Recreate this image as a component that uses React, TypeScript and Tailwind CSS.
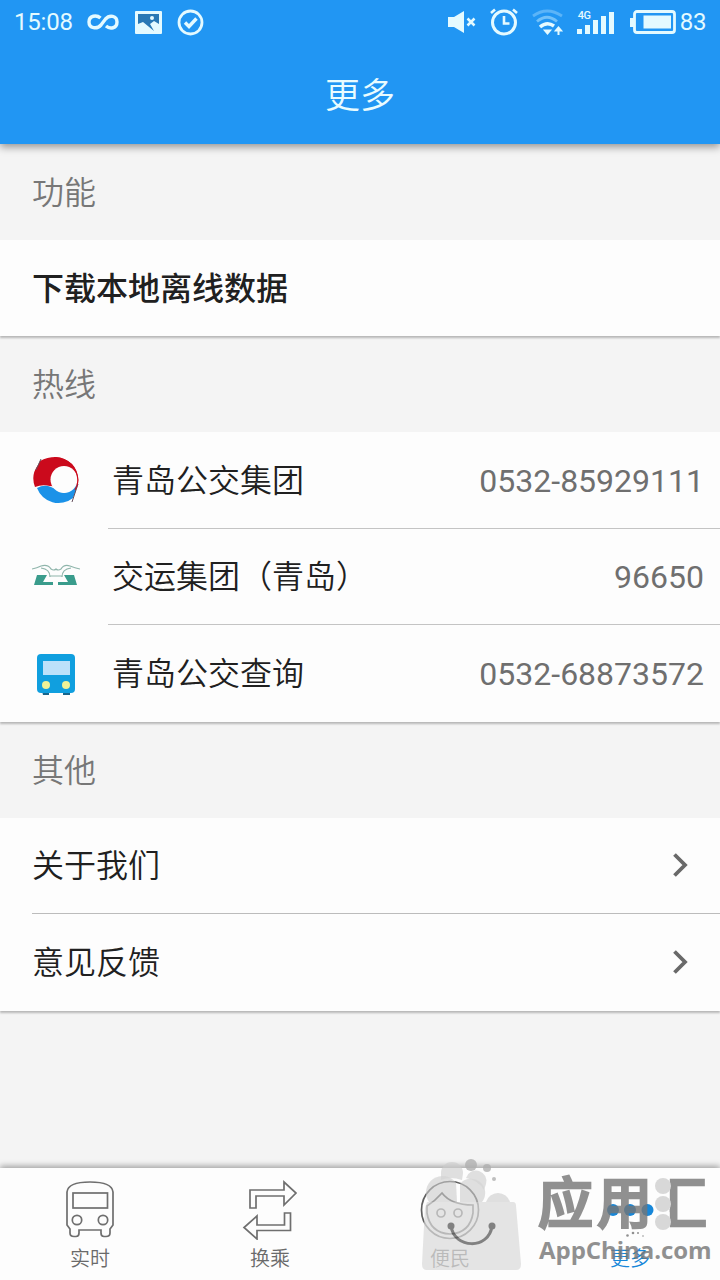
/**
 * 更多页面 - 功能、热线与其他设置入口
 */

import React from 'react';

interface Hotline {
  name: string;
  phone: string;
  icon: React.ReactNode;
}

interface Tab {
  label: string;
  icon: React.ReactNode;
  active?: boolean;
}

// 公交集团标志
const GroupLogo = () => (
  <svg className="w-12 h-12" viewBox="0 0 48 48">
    <path d="M3 31A23 23 0 0 1 6 9L8 5Q15 1 24 1A23 23 0 0 1 46 23L45 32L18 30Q10 28 3 31Z" fill="#cb0a1c" />
    <path d="M5 32Q12 28 19 31L32 37Q40 34 46 27Q44 36 41 42A23 23 0 0 1 5 32Z" fill="#1b92e8" />
    <circle cx="32" cy="23.500" r="13.500" fill="#fdfdfd" />
    <path d="M4 14L9 3M46 28L40 46" stroke="#66505e" strokeWidth="1" fill="none" />
    <path d="M22 1.500Q44 3 46 24Q46 29 43 34" stroke="#cb0a1c" strokeWidth="1.200" fill="none" />
  </svg>
);

// 交运集团标志
const TransportLogo = () => (
  <svg className="w-12 h-12" viewBox="0 -3 48 48" fill="none">
    <path d="M5 19H15L11 26H21V29H2Z" fill="#3a9c8c" />
    <path d="M32 19H42L45 29H26V26H36Z" fill="#3a9c8c" />
    <path d="M0 13Q5 12 9 10Q16 8 19 13Q22 15 24 13Q26 15 29 13Q32 8 38 10Q43 12 48 13M9 12Q18 13 18 21M39 12Q30 13 30 21M18 20H30" stroke="#8fb5ab" strokeWidth="1.200" />
  </svg>
);

// 公交查询标志
const BusLogo = () => (
  <svg className="w-12 h-12" viewBox="0 0 48 48">
    <path d="M10 42H17V46H11ZM31 42H38V46H31Z" fill="#17658c" />
    <rect x="5" y="5" width="38" height="39" rx="4" fill="#109fdf" />
    <rect x="11" y="12" width="27" height="14" fill="#bce1fa" />
    <circle cx="14" cy="36" r="4" fill="#f0f397" />
    <circle cx="34" cy="36" r="4" fill="#f0f397" />
  </svg>
);

const BusIcon = () => (
  <svg className="w-15 h-15" viewBox="0 0 60 60" fill="none" stroke="#6f6f6f" strokeWidth="1.7">
    <path d="M7 12Q8 2 30 2Q52 2 53 12V45L50 49V53Q50 56.500 46 56.500H44Q41 56.500 41 53V50H19V53Q19 56.500 16 56.500H14Q10 56.500 10 53V49L7 45Z" />
    <rect x="13" y="13" width="34.500" height="15" />
    <circle cx="17" cy="40" r="4.700" />
    <circle cx="43" cy="40" r="4.700" />
  </svg>
);

const TransferIcon = () => (
  <svg className="w-15 h-15" viewBox="0 0 60 60" fill="none" stroke="#6f6f6f" strokeWidth="1.700">
    <path d="M10 28V10H44V2L56 13L44 25V16H16V28Z" />
    <path d="M50.500 33H44.500V45H17V36L4 47.500L17 59V50.500H50.500Z" />
  </svg>
);

const PersonIcon = () => (
  <svg className="w-15 h-15" viewBox="0 0 60 60" fill="none" stroke="#606060" strokeWidth="1.700">
    <circle cx="30" cy="30" r="28.500" />
    <path d="M7 26Q15 21 22 13Q31 25 53 25V33Q50 53 30 54Q10 53 7 33Z" />
    <circle cx="21" cy="33" r="4" />
    <circle cx="38" cy="33" r="4" />
  </svg>
);

const MoreIcon = () => (
  <svg className="w-15 h-15" viewBox="0 0 60 60" fill="#1787d9">
    <circle cx="13" cy="30" r="6" />
    <circle cx="30" cy="30" r="6" />
    <circle cx="47.500" cy="30" r="6" />
  </svg>
);

const Chevron = () => (
  <svg className="w-4 h-6" viewBox="0 0 16 24" fill="none" stroke="#696969" strokeWidth="3.800">
    <path d="M2.500 1.500L13 12L2.500 22.500" />
  </svg>
);

const hotlines: Hotline[] = [
  { name: '青岛公交集团', phone: '0532-85929111', icon: <GroupLogo /> },
  { name: '交运集团（青岛）', phone: '96650', icon: <TransportLogo /> },
  { name: '青岛公交查询', phone: '0532-68873572', icon: <BusLogo /> },
];

const tabs: Tab[] = [
  { label: '实时', icon: <BusIcon /> },
  { label: '换乘', icon: <TransferIcon /> },
  { label: '便民', icon: <PersonIcon /> },
  { label: '更多', icon: <MoreIcon />, active: true },
];

// 状态栏
const StatusBar = () => (
  <div className="flex h-11 items-center justify-between pl-3.5 pr-3.5 text-2xl text-[#e4faff]">
    <div className="flex items-center">
      <span className="w-[59px] tracking-[-0.2px]">15:08</span>
      <svg className="ml-3.5 w-8 h-5" viewBox="0 0 32 20" fill="none" stroke="currentColor" strokeWidth="3.400">
        <path d="M13.500 6C9.500 2.500 2 3.500 2 10C2 16.500 10 17.500 14 13L18.500 7C22.500 2.500 30 3.500 30 10C30 16.500 23 17.500 19 14" />
      </svg>
      <svg className="ml-4 w-[27px] h-[23px]" viewBox="0 0 27 23">
        <rect width="27" height="23" rx="1" fill="currentColor" />
        <path d="M3 3H24V13L19 10L15 13L19 20L8 11L3 13Z" fill="#2878b5" />
        <circle cx="17" cy="7" r="2" fill="currentColor" />
      </svg>
      <svg className="ml-[15px] w-[27px] h-[27px]" viewBox="0 0 27 27" fill="none" stroke="currentColor">
        <circle cx="13.500" cy="13.500" r="11.500" strokeWidth="2.800" />
        <path d="M8 13.500L12 17.500L19.500 9.500" strokeWidth="3.400" />
      </svg>
    </div>
    <div className="flex items-center">
      <svg className="w-7 h-6" viewBox="0 0 28 24">
        <path d="M0 7H6L16 1V23L6 17H0Z" fill="currentColor" />
        <path d="M19.500 8.500L26.500 15.500M26.500 8.500L19.500 15.500" stroke="currentColor" strokeWidth="2.500" />
      </svg>
      <svg className="ml-3.5 w-7 h-7" viewBox="0 0 28 28" fill="none" stroke="currentColor" strokeWidth="3">
        <circle cx="14" cy="14.500" r="11.500" />
        <path d="M14 8V15.500H19.500M1 5L5 1.500M27 5L23 1.500" strokeWidth="2.600" />
      </svg>
      <svg className="ml-3.5 w-8 h-7" viewBox="0 0 32 28" fill="none" stroke="currentColor">
        <path d="M1 8Q15 -2 30 8" stroke="#5bb4f8" strokeWidth="2.800" />
        <path d="M5 13.500Q15 5 25 13.500" stroke="#72c1f9" strokeWidth="2.800" />
        <path d="M8 19Q15 13 22 18" strokeWidth="3.500" />
        <path d="M13 22.500H18L15.500 25.500ZM26.500 27V21M24 22.500L26.500 19.500L29 22.500Z" fill="currentColor" strokeWidth="2" />
      </svg>
      <div className="relative ml-3 h-7 w-10">
        <span className="absolute left-0.5 top-0.5 text-[11px] leading-[11px] font-medium tracking-[-0.5px]">4G</span>
        <svg className="w-10 h-7" viewBox="0 0 40 28" fill="currentColor">
          <path d="M1 21H6V26H1ZM9 17H14V26H9ZM17 12H22V26H17ZM25 8H30V26H25ZM33 4H38V26H33Z" />
        </svg>
      </div>
      <svg className="ml-3.5 w-[46px] h-6" viewBox="0 0 46 24">
        <rect x="4.500" y="1.500" width="40" height="21" rx="2.500" fill="none" stroke="currentColor" strokeWidth="2.800" />
        <path d="M0 8H4V17H0ZM13.500 5.500H41V18.500H13.500Z" fill="currentColor" />
      </svg>
      <span className="ml-1 text-2xl tracking-[-0.4px]">83</span>
    </div>
  </div>
);

const SectionTitle = ({ title }: { title: string }) => (
  <h2 className="flex h-24 items-center pt-0.5 pl-8 text-[32px] font-[350] text-[#777777]">{title}</h2>
);

// 底部应用汇标识
const AppChinaMark = () => (
  <div className="pointer-events-none absolute right-0 bottom-0 flex h-[124px] w-[300px] opacity-80">
    <svg className="h-[124px] w-[110px] shrink-0" viewBox="0 0 110 124">
      <g fill="#cbcbcb" fillOpacity="0.75">
        <path d="M21 17A11 11 0 0 1 43 17L42 24Q30 20 21 24Z" />
        <path d="M9 46A14.500 14.500 0 0 1 36 27L37 46Z" />
        <path d="M40 46V28A13 13 0 0 1 62 46Z" />
        <path d="M46 22A10 10 0 0 1 66 28L64 34Q58 24 46 22Z" />
        <path d="M66 46A12.500 12.500 0 0 1 90 46Z" />
      </g>
      <path d="M7 46H93Q96 46 96 50L101 108Q101 114 96 114H7Q2 114 2 108L5 52Z" fill="#dadada" fillOpacity="0.9" />
      <g fill="#b0b0b0">
        <circle cx="51" cy="9" r="6" />
        <circle cx="67" cy="12" r="4" />
        <circle cx="74" cy="23" r="2" />
        <circle cx="31" cy="70" r="3.500" fill="#636363" />
        <circle cx="72" cy="70" r="3.500" fill="#636363" />
      </g>
      <path d="M31 70C34 93 69 94 72 70" fill="none" stroke="#636363" strokeWidth="3" />
    </svg>
    <div className="flex w-[190px] flex-col pt-[14px] pl-[8px] text-[#767676]">
      <div className="relative flex h-[68px] items-center gap-[4px] font-medium text-[55px] leading-none [-webkit-text-stroke:2.5px_#767676]">
        <span>应</span>
        <span>用</span>
        <span className="-ml-1 [clip-path:inset(0_0_0_32%)]">汇</span>
        <svg className="absolute left-[117px] top-[6px] h-14 w-4" viewBox="0 0 16 56" fill="#d0d0d0">
          <circle cx="8" cy="10" r="8" />
          <circle cx="8" cy="28" r="8" />
          <circle cx="8" cy="46" r="8" />
        </svg>
      </div>
      <div className="relative mt-[-2px]">
        <svg className="absolute left-[88px] top-[-9px] h-3 w-5" viewBox="0 0 20 12" fill="#767676">
          <circle cx="1.500" cy="8.500" r="1.300" />
          <circle cx="7" cy="6" r="1.300" />
          <circle cx="12" cy="6" r="1" />
          <circle cx="17" cy="9" r="0.800" />
        </svg>
        <span className="pl-px font-['Open_Sans'] text-2xl leading-7 font-bold tracking-[-0.05px]">AppChina.com</span>
      </div>
    </div>
  </div>
);

const App: React.FC = () => {
  return (
    <div className="relative flex h-[1280px] w-[720px] flex-col overflow-hidden bg-[#f4f4f4] font-[Roboto,'Noto_Sans_CJK_SC',sans-serif] text-[#202020]">
      <header className="h-36 shrink-0 bg-[#2196f3] shadow-[0_3px_8px_rgba(0,0,0,0.4)]">
        <StatusBar />
        <h1 className="flex h-[100px] items-center justify-center pt-1.5 text-[35px] font-[350] text-[#e9fcff]">更多</h1>
      </header>

      <main className="flex-1">
        <SectionTitle title="功能" />
        <div className="flex h-24 items-center bg-[#fdfdfd] pt-0.5 pl-8 text-[32px] font-medium shadow-[0_2px_2px_rgba(0,0,0,0.25)]">
          下载本地离线数据
        </div>

        <SectionTitle title="热线" />
        <ul className="bg-[#fdfdfd] shadow-[0_2px_2px_rgba(0,0,0,0.25)]">
          {hotlines.map((item, i) => (
            <li key={item.name} className="flex h-[96.5px] items-center pl-8">
              {item.icon}
              <div
                className={`ml-7 flex h-full flex-1 items-center justify-between pt-0.5 pr-4 pl-1 text-[32px] ${
                  i < hotlines.length - 1 ? 'border-b border-[#c4c4c4]' : ''
                }`}
              >
                <span className="font-[350]">{item.name}</span>
                <span className="text-[#6f6f6f]">{item.phone}</span>
              </div>
            </li>
          ))}
        </ul>

        <SectionTitle title="其他" />
        <ul className="bg-[#fdfdfd] pl-8 text-[32px] font-[350] shadow-[0_2px_2px_rgba(0,0,0,0.25)]">
          <li className="flex h-24 items-center justify-between border-b border-[#bcbcbc] pr-8">
            <span className="pt-0.5">关于我们</span>
            <Chevron />
          </li>
          <li className="flex h-[97px] items-center justify-between pr-8">
            <span className="pt-0.5">意见反馈</span>
            <Chevron />
          </li>
        </ul>
      </main>

      {/* 底部导航 */}
      <nav className="grid h-28 shrink-0 grid-cols-4 bg-[#fdfdfd] shadow-[0_-2px_6px_rgba(0,0,0,0.35)]">
        {tabs.map((tab) => (
          <div
            key={tab.label}
            className={`flex flex-col items-center pt-3 text-xl leading-[38px] font-[350] ${
              tab.active ? 'text-[#1787d9]' : 'text-[#6a6a6a]'
            }`}
          >
            {tab.icon}
            <span>{tab.label}</span>
          </div>
        ))}
      </nav>
      <AppChinaMark />
    </div>
  );
};

export default App;
